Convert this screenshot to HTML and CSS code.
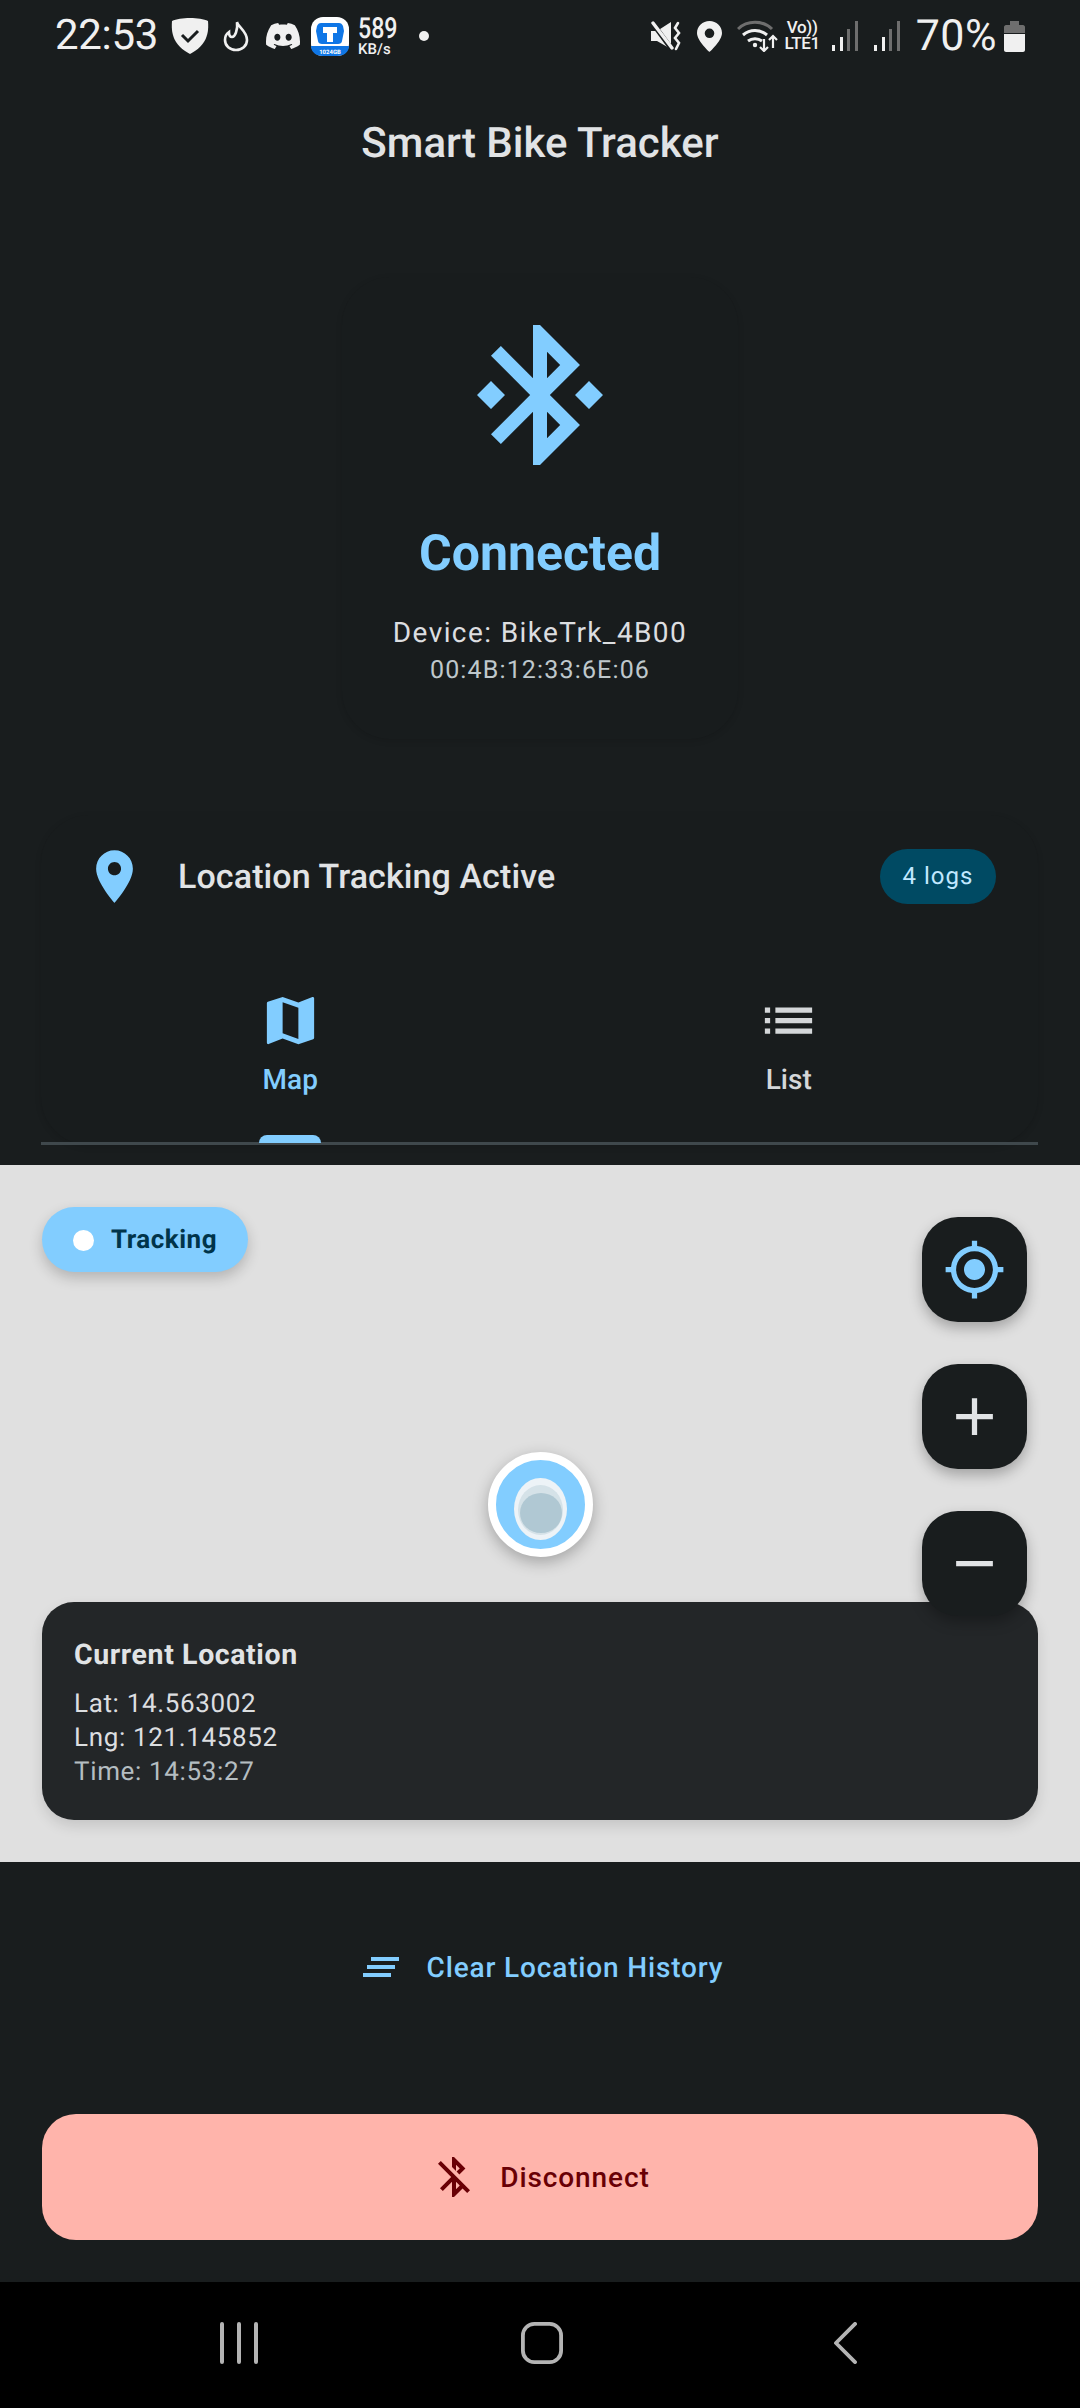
FILE: index.html
```html
<!DOCTYPE html>
<html lang="en">
<head>
  <meta charset="UTF-8">
  <title>Smart Bike Tracker</title>
  <link rel="stylesheet" href="styles.css">
</head>
<body>

<div class="status-bar">
  <div class="status-left">
    <span class="clock">22:53</span>
    <svg class="ic-shield" viewBox="0 0 38 36"><path fill="#f0f0f0" d="M19 0C12 0 5 1 1 3c-1 12 1 24 18 33C36 27 38 15 37 3 33 1 26 0 19 0z"/><path fill="none" stroke="#191d1e" stroke-width="3" d="M11 17l6 6 10-10"/></svg>
    <svg class="ic-flame" viewBox="0 0 26 32"><path fill="none" stroke="#f0f0f0" stroke-width="2.6" stroke-linecap="round" d="M14 2c1 5 10 9 10 18 0 6-5 10-11 10S2 26 2 20c0-3 1-6 4-8 0 3 1 5 3 5 3 0 6-7 5-15z"/></svg>
    <svg class="ic-discord" viewBox="0 0 24 24"><path fill="#f0f0f0" d="M20.317 4.3698a19.7913 19.7913 0 00-4.8851-1.5152.0741.0741 0 00-.0785.0371c-.211.3753-.4447.8648-.6083 1.2495-1.8447-.2762-3.68-.2762-5.4868 0-.1636-.3933-.4058-.8742-.6177-1.2495a.077.077 0 00-.0785-.037 19.7363 19.7363 0 00-4.8852 1.515.0699.0699 0 00-.0321.0277C.5334 9.0458-.319 13.5799.0992 18.0578a.0824.0824 0 00.0312.0561c2.0528 1.5076 4.0413 2.4228 5.9929 3.0294a.0777.0777 0 00.0842-.0276c.4616-.6304.8731-1.2952 1.226-1.9942a.076.076 0 00-.0416-.1057c-.6528-.2476-1.2743-.5495-1.8722-.8923a.077.077 0 01-.0076-.1277c.1258-.0943.2517-.1923.3718-.2914a.0743.0743 0 01.0776-.0105c3.9278 1.7933 8.18 1.7933 12.0614 0a.0739.0739 0 01.0785.0095c.1202.099.246.1981.3728.2924a.077.077 0 01-.0066.1276 12.2986 12.2986 0 01-1.873.8914.0766.0766 0 00-.0407.1067c.3604.698.7719 1.3628 1.225 1.9932a.076.076 0 00.0842.0286c1.961-.6067 3.9495-1.5219 6.0023-3.0294a.077.077 0 00.0313-.0552c.5004-5.177-.8382-9.6739-3.5485-13.6604a.061.061 0 00-.0312-.0286zM8.02 15.3312c-1.1825 0-2.1569-1.0857-2.1569-2.419 0-1.3332.9555-2.4189 2.157-2.4189 1.2108 0 2.1757 1.0952 2.1568 2.419 0 1.3332-.9555 2.4189-2.1569 2.4189zm7.9748 0c-1.1825 0-2.1569-1.0857-2.1569-2.419 0-1.3332.9554-2.4189 2.1569-2.4189 1.2108 0 2.1757 1.0952 2.1568 2.419 0 1.3332-.946 2.4189-2.1568 2.4189Z"/></svg>
    <svg class="ic-app" viewBox="0 0 38 39"><rect width="38" height="39" rx="12" fill="#fff"/><path fill="#0f76e6" d="M0 29h38v-2 2c0 6-5 10-12 10H12C5 39 0 35 0 29z"/><path fill="#0f76e6" d="M10 6h18c2 0 3 1 4 3l1 5-2 10c0 2-2 3-4 3H11c-2 0-4-1-4-3L5 14l1-5c1-2 2-3 4-3z"/><path fill="#fff" d="M12 10h14v6h-4v9h-6v-9h-4z"/><text x="19" y="37" class="app-label" text-anchor="middle">1024GB</text></svg>
    <span class="speed"><span class="speed-num">589</span><span class="speed-unit">KB/s</span></span>
    <span class="status-dot"></span>
  </div>
  <div class="status-right">
    <svg class="ic-mute" viewBox="0 0 30 30"><path fill="#f0f0f0" d="M0 10h6L20 1v27L6 20H0z"/><path stroke="#191d1e" stroke-width="5" d="M0 0l22 30"/><path stroke="#f0f0f0" stroke-width="3.400" stroke-linecap="round" d="M2 2l19 25"/><path fill="none" stroke="#f0f0f0" stroke-width="2.600" stroke-linecap="round" d="M27 2l-3 5 4 5-4 5 4 5-3 6"/></svg>
    <svg class="ic-pin" viewBox="0 0 25 31"><path fill="#f0f0f0" fill-rule="evenodd" d="M12.500 0C5.600 0 0 5.400 0 12c0 8 12.500 19 12.500 19S25 20 25 12C25 5.400 19.400 0 12.500 0zm0 7.500a4.800 4.800 0 110 9.600 4.800 4.800 0 010-9.600z"/></svg>
    <svg class="ic-wifi" viewBox="0 0 42 32"><path fill="none" stroke="#6e6e6e" stroke-width="3" d="M1 9c9-9 25-9 34 0"/><path fill="none" stroke="#f0f0f0" stroke-width="3" d="M6 15c7-6 17-6 24 0M11 21c4-3 10-3 14 0"/><circle cx="18" cy="25" r="2.200" fill="#f0f0f0"/><path fill="none" stroke="#f0f0f0" stroke-width="2.200" d="M27 19v12M23 27l4 4 4-4M36 28V16M32 20l4-4 4 4"/></svg>
    <span class="volte"><span>Vo))</span><span>LTE1</span></span>
    <svg class="ic-signal" viewBox="0 0 26 30"><path fill="#f0f0f0" d="M0 24h3v6H0zM8 16h3v14H8z"/><path fill="#6e6e6e" d="M15 8h3v22h-3zM23 0h3v30h-3z"/></svg>
    <svg class="ic-signal second" viewBox="0 0 26 30"><path fill="#f0f0f0" d="M0 24h3v6H0zM8 16h3v14H8z"/><path fill="#6e6e6e" d="M15 8h3v22h-3zM23 0h3v30h-3z"/></svg>
    <span class="clock battery-text">70%</span>
    <svg class="ic-battery" viewBox="0 0 21 31"><path fill="#6e6e6e" d="M6 0h9v4h4c1 0 2 1 2 2v6H0V6c0-1 1-2 2-2h4z"/><path fill="#f0f0f0" d="M0 13h21v16c0 1-1 2-2 2H2c-1 0-2-1-2-2z"/></svg>
  </div>
</div>

<h1 class="app-title">Smart Bike Tracker</h1>

<section class="device-card">
  <svg class="bt-icon" viewBox="0 0 24 24"><path d="M7 12l-2-2-2 2 2 2 2-2zm10.710-4.290L12 2h-1v7.590L6.410 5 5 6.410 10.590 12 5 17.590 6.410 19 11 14.410V22h1l5.710-5.710-4.300-4.290 4.300-4.290zM13 5.830l1.880 1.880L13 9.590V5.830zm1.880 10.460L13 18.170v-3.760l1.880 1.880zM19 10l-2 2 2 2 2-2-2-2z"/></svg>
  <div class="device-state">Connected</div>
  <div class="device-name">Device: BikeTrk_4B00</div>
  <div class="device-mac">00:4B:12:33:6E:06</div>
</section>

<section class="tracking-card">
  <div class="tracking-row">
    <svg class="pin-icon" viewBox="0 0 24 24"><path d="M12 2C8.130 2 5 5.130 5 9c0 5.250 7 13 7 13s7-7.750 7-13c0-3.870-3.130-7-7-7zm0 9.500c-1.380 0-2.500-1.120-2.500-2.500s1.120-2.500 2.500-2.500 2.500 1.120 2.500 2.500-1.120 2.500-2.500 2.500z"/></svg>
    <span class="tracking-label">Location Tracking Active</span>
    <span class="logs-badge">4 logs</span>
  </div>
  <div class="tabs">
    <div class="tab active">
      <svg class="tab-icon" viewBox="0 0 24 24"><path d="M20.500 3l-.16.030L15 5.100 9 3 3.360 4.900c-.21.070-.36.250-.36.480V20.500c0 .28.220.5.5.5l.16-.03L9 18.900l6 2.100 5.640-1.900c.21-.07.360-.25.360-.48V3.500c0-.28-.22-.5-.5-.5zM15 19l-6-2.110V5l6 2.110V19z"/></svg>
      <span class="tab-label">Map</span>
      <span class="tab-indicator"></span>
    </div>
    <div class="tab">
      <svg class="tab-icon" viewBox="0 0 24 24"><path d="M3 13h2v-2H3v2zm0 4h2v-2H3v2zm0-8h2V7H3v2zm4 4h14v-2H7v2zm0 4h14v-2H7v2zM7 7v2h14V7H7z"/></svg>
      <span class="tab-label">List</span>
    </div>
  </div>
</section>

<section class="map">
  <div class="tracking-pill"><span class="pill-dot"></span>Tracking</div>

  <div class="map-controls">
    <button class="map-btn">
      <svg class="accent" viewBox="0 0 24 24"><path d="M12 8c-2.210 0-4 1.790-4 4s1.790 4 4 4 4-1.790 4-4-1.790-4-4-4zm8.940 3c-.46-4.170-3.770-7.480-7.940-7.940V1h-2v2.060C6.830 3.520 3.520 6.830 3.060 11H1v2h2.060c.46 4.170 3.770 7.480 7.940 7.940V23h2v-2.060c4.170-.46 7.480-3.770 7.940-7.940H23v-2h-2.060zM12 19c-3.870 0-7-3.130-7-7s3.130-7 7-7 7 3.130 7 7-3.130 7-7 7z"/></svg>
    </button>
    <button class="map-btn">
      <svg viewBox="0 0 24 24"><path d="M19 13h-6v6h-2v-6H5v-2h6V5h2v6h6v2z"/></svg>
    </button>
    <button class="map-btn">
      <svg viewBox="0 0 24 24"><path d="M19 13H5v-2h14v2z"/></svg>
    </button>
  </div>

  <div class="marker">
    <span class="marker-halo"></span>
    <span class="marker-ring"></span>
    <span class="marker-core"></span>
  </div>

  <div class="location-card">
    <div class="location-title">Current Location</div>
    <div class="location-line">Lat: 14.563002</div>
    <div class="location-line">Lng: 121.145852</div>
    <div class="location-line muted">Time: 14:53:27</div>
  </div>
</section>

<div class="clear-row">
  <svg viewBox="0 0 24 24"><path d="M5 13h14v-2H5v2zm-2 4h14v-2H3v2zM7 7v2h14V7H7z"/></svg>
  <span>Clear Location History</span>
</div>

<button class="disconnect">
  <svg viewBox="0 0 24 24"><path d="M13 5.830l1.880 1.880-1.600 1.600 1.410 1.410 3.020-3.020L12 2h-1v5.030l2 2v-3.200zM5.410 4L4 5.410 10.590 12 5 17.590 6.410 19 11 14.410V22h1l4.290-4.290 2.300 2.290L20 18.590 5.410 4zM13 18.170v-3.760l1.880 1.880L13 18.170z"/></svg>
  <span>Disconnect</span>
</button>

<nav class="nav-bar">
  <svg class="nav-recents" viewBox="0 0 38 42"><path d="M2 2v38M19 2v38M36 2v38"/></svg>
  <svg class="nav-home" viewBox="0 0 44 44"><rect x="2" y="2" width="40" height="40" rx="12"/></svg>
  <svg class="nav-back" viewBox="0 0 26 44"><path d="M23 2L3 22l20 20"/></svg>
</nav>

</body>
</html>
```

FILE: styles.css
```css
html,
body {
  margin: 0;
  padding: 0;
}

body {
  width: 1080px;
  height: 2408px;
  overflow: hidden;
  display: flex;
  flex-direction: column;
  background: #191d1e;
  color: #e1e3e5;
  font-family: Roboto, sans-serif;
  text-rendering: geometricPrecision;
}

svg {
  display: block;
  flex: none;
  fill: currentColor;
}

/* status bar */
.status-bar {
  height: 72px;
  flex: none;
  display: flex;
  justify-content: space-between;
  align-items: center;
  padding: 0 55px 0 55px;
  box-sizing: border-box;
  color: #f0f0f0;
}

.status-left,
.status-right {
  display: flex;
  align-items: center;
}

.clock {
  font-size: 42px;
  line-height: 44px;
  letter-spacing: -0.3px;
}

.ic-shield {
  width: 38px;
  height: 36px;
  margin-left: 13px;
}

.ic-flame {
  width: 26px;
  height: 32px;
  margin-left: 14px;
}

.ic-discord {
  width: 34px;
  height: 34px;
  margin-left: 17px;
}

.ic-app {
  width: 38px;
  height: 39px;
  margin-left: 11px;
}

.app-label {
  font-size: 6px;
  font-weight: 700;
  fill: #fff;
}

.speed {
  display: flex;
  flex-direction: column;
  align-items: flex-start;
  width: 38px;
  margin-left: 9px;
  font-weight: 500;
}

.speed-num {
  font-size: 29px;
  line-height: 26px;
  transform: scaleX(0.8);
  transform-origin: left center;
  white-space: nowrap;
}

.speed-unit {
  font-size: 15px;
  line-height: 14px;
}

.status-dot {
  width: 10px;
  height: 10px;
  margin-left: 23px;
  border-radius: 50%;
  background: #f0f0f0;
}

.ic-mute {
  width: 30px;
  height: 30px;
}

.ic-pin {
  width: 25px;
  height: 31px;
  margin-left: 16px;
}

.ic-wifi {
  width: 42px;
  height: 32px;
  margin-left: 15px;
}

.volte {
  display: flex;
  flex-direction: column;
  align-items: center;
  width: 39px;
  margin-left: 4px;
  font-size: 17px;
  line-height: 16px;
  font-weight: 500;
  letter-spacing: -0.3px;
}

.ic-signal {
  width: 26px;
  height: 30px;
  margin-left: 10px;
}

.ic-signal.second {
  margin-left: 16px;
}

.battery-text {
  margin-left: 16px;
  font-size: 43px;
  letter-spacing: 0.5px;
}

.ic-battery {
  width: 21px;
  height: 31px;
  margin-left: 7px;
}

/* header */
.app-title {
  margin: 49px 0 0;
  height: 46px;
  font-size: 42px;
  line-height: 46px;
  font-weight: 500;
  text-align: center;
  color: #e1e3e5;
}

/* connection card */
.device-card {
  width: 396px;
  height: 462px;
  flex: none;
  box-sizing: border-box;
  margin: 110px auto 0;
  padding-top: 34px;
  display: flex;
  flex-direction: column;
  align-items: center;
  border-radius: 48px;
  background: #181c1d;
  box-shadow: 0 2px 6px rgba(0, 0, 0, 0.12);
}

.bt-icon {
  width: 168px;
  height: 168px;
  color: #82cdff;
}

.device-state {
  margin-top: 47px;
  font-size: 50px;
  line-height: 56px;
  font-weight: 700;
  color: #82cdff;
}

.device-name {
  margin-top: 32px;
  font-size: 28px;
  line-height: 38px;
  letter-spacing: 1.4px;
  color: #dcdee0;
}

.device-mac {
  font-size: 25px;
  line-height: 38px;
  letter-spacing: 1.15px;
  color: #bfc8cc;
}

/* location tracking card */
.tracking-card {
  width: 997px;
  height: 330px;
  flex: none;
  box-sizing: border-box;
  margin: 76px 0 0 41px;
  display: flex;
  flex-direction: column;
  border-radius: 48px;
  background: #181c1d;
  box-shadow: 0 2px 6px rgba(0, 0, 0, 0.12);
}

.tracking-row {
  height: 122px;
  flex: none;
  display: flex;
  align-items: center;
  padding: 0 42px;
}

.pin-icon {
  width: 63px;
  height: 63px;
  color: #82cdff;
}

.tracking-label {
  margin: 2px 0 0 32px;
  font-size: 34px;
  letter-spacing: 0.1px;
  font-weight: 500;
}

.logs-badge {
  margin-left: auto;
  width: 116px;
  height: 55px;
  line-height: 55px;
  text-align: center;
  border-radius: 28px;
  background: #004a63;
  color: #c1e8ff;
  font-size: 24px;
  letter-spacing: 1px;
}

.tabs {
  flex: 1;
  display: flex;
  border-bottom: 3px solid #3f484c;
}

.tab {
  flex: 1;
  display: flex;
  flex-direction: column;
  align-items: center;
  padding-top: 52px;
  color: #d4d7d9;
}

.tab.active {
  color: #82cdff;
}

.tab-icon {
  width: 63px;
  height: 63px;
}

.tab-label {
  margin-top: 11px;
  font-size: 28px;
  line-height: 34px;
  font-weight: 500;
}

.tab-indicator {
  width: 62px;
  height: 8px;
  margin-top: auto;
  margin-bottom: -1px;
  border-radius: 8px 8px 0 0;
  background: #82cdff;
}

/* map */
.map {
  position: relative;
  height: 697px;
  flex: none;
  margin-top: 20px;
  background: #e0e0e0;
}

.tracking-pill {
  position: absolute;
  left: 42px;
  top: 42px;
  height: 65px;
  padding: 1px 31px 0;
  box-sizing: border-box;
  display: flex;
  align-items: center;
  border-radius: 33px;
  background: #82cdff;
  color: #00344a;
  font-size: 26px;
  font-weight: 700;
  letter-spacing: 0.5px;
  box-shadow: 0 6px 14px rgba(0, 0, 0, 0.2);
}

.pill-dot {
  width: 21px;
  height: 21px;
  margin-right: 17px;
  border-radius: 50%;
  background: #fff;
}

.map-controls {
  position: absolute;
  z-index: 2;
  right: 53px;
  top: 52px;
  display: flex;
  flex-direction: column;
  gap: 42px;
}

.map-btn {
  width: 105px;
  height: 105px;
  padding: 0;
  display: flex;
  align-items: center;
  justify-content: center;
  border: 0;
  border-radius: 36px;
  background: #191d1e;
  color: #e1e3e5;
  box-shadow: 0 6px 14px rgba(0, 0, 0, 0.28);
}

.map-btn svg {
  width: 63px;
  height: 63px;
}

.map-btn .accent {
  color: #82cdff;
}

.marker {
  position: absolute;
  left: 488px;
  top: 287px;
  width: 105px;
  height: 105px;
  box-sizing: border-box;
  border: 8px solid #fff;
  border-radius: 50%;
  background: #82cdff;
  box-shadow: 0 5px 16px rgba(0, 0, 0, 0.28);
}

.marker-halo,
.marker-ring,
.marker-core {
  position: absolute;
  border-radius: 50%;
}

.marker-halo {
  left: 18px;
  top: 18px;
  width: 53px;
  height: 62px;
  background: #edf3f7;
}

.marker-ring {
  left: 22px;
  top: 25px;
  width: 45px;
  height: 50px;
  background: #d5e2e8;
}

.marker-core {
  left: 24px;
  top: 33px;
  width: 42px;
  height: 40px;
  background: #b0c8d3;
}

.location-card {
  position: absolute;
  left: 42px;
  top: 437px;
  width: 996px;
  height: 218px;
  box-sizing: border-box;
  padding: 36px 32px 0;
  border-radius: 32px;
  background: #232628;
  box-shadow: 0 6px 14px rgba(0, 0, 0, 0.12);
}

.location-title {
  margin-bottom: 15px;
  font-size: 28.5px;
  line-height: 34px;
  font-weight: 700;
  letter-spacing: 0.6px;
}

.location-line {
  font-size: 26px;
  line-height: 34px;
  letter-spacing: 0.65px;
  color: #dcdee0;
}

.location-line.muted {
  color: #b4bdc1;
}

/* actions */
.clear-row {
  height: 48px;
  flex: none;
  margin-top: 81px;
  display: flex;
  align-items: center;
  justify-content: center;
  gap: 22px;
  color: #82cdff;
  font-size: 28px;
  font-weight: 500;
  letter-spacing: 0.85px;
}

.clear-row svg {
  width: 48px;
  height: 48px;
}

.disconnect {
  width: 996px;
  height: 126px;
  flex: none;
  margin: 123px 0 0 42px;
  padding: 0;
  display: flex;
  align-items: center;
  justify-content: center;
  gap: 22px;
  border: 0;
  border-radius: 34px;
  background: #ffb4ab;
  color: #690005;
  font-family: Roboto, sans-serif;
  font-size: 28px;
  font-weight: 500;
  letter-spacing: 0.9px;
}

.disconnect svg {
  width: 48px;
  height: 48px;
}

/* system navigation */
.nav-bar {
  margin-top: auto;
  height: 126px;
  flex: none;
  box-sizing: border-box;
  padding-top: 40px;
  display: flex;
  align-items: flex-start;
  background: #000;
}

.nav-bar svg {
  height: 42px;
  fill: none;
  stroke: #b4b4b4;
  stroke-width: 4;
  stroke-linecap: round;
  stroke-linejoin: round;
}

.nav-recents {
  width: 38px;
  margin-left: 220px;
}

.nav-home {
  width: 42px;
  margin-left: 263px;
}

.nav-back {
  width: 25px;
  margin-left: 270px;
}
```
